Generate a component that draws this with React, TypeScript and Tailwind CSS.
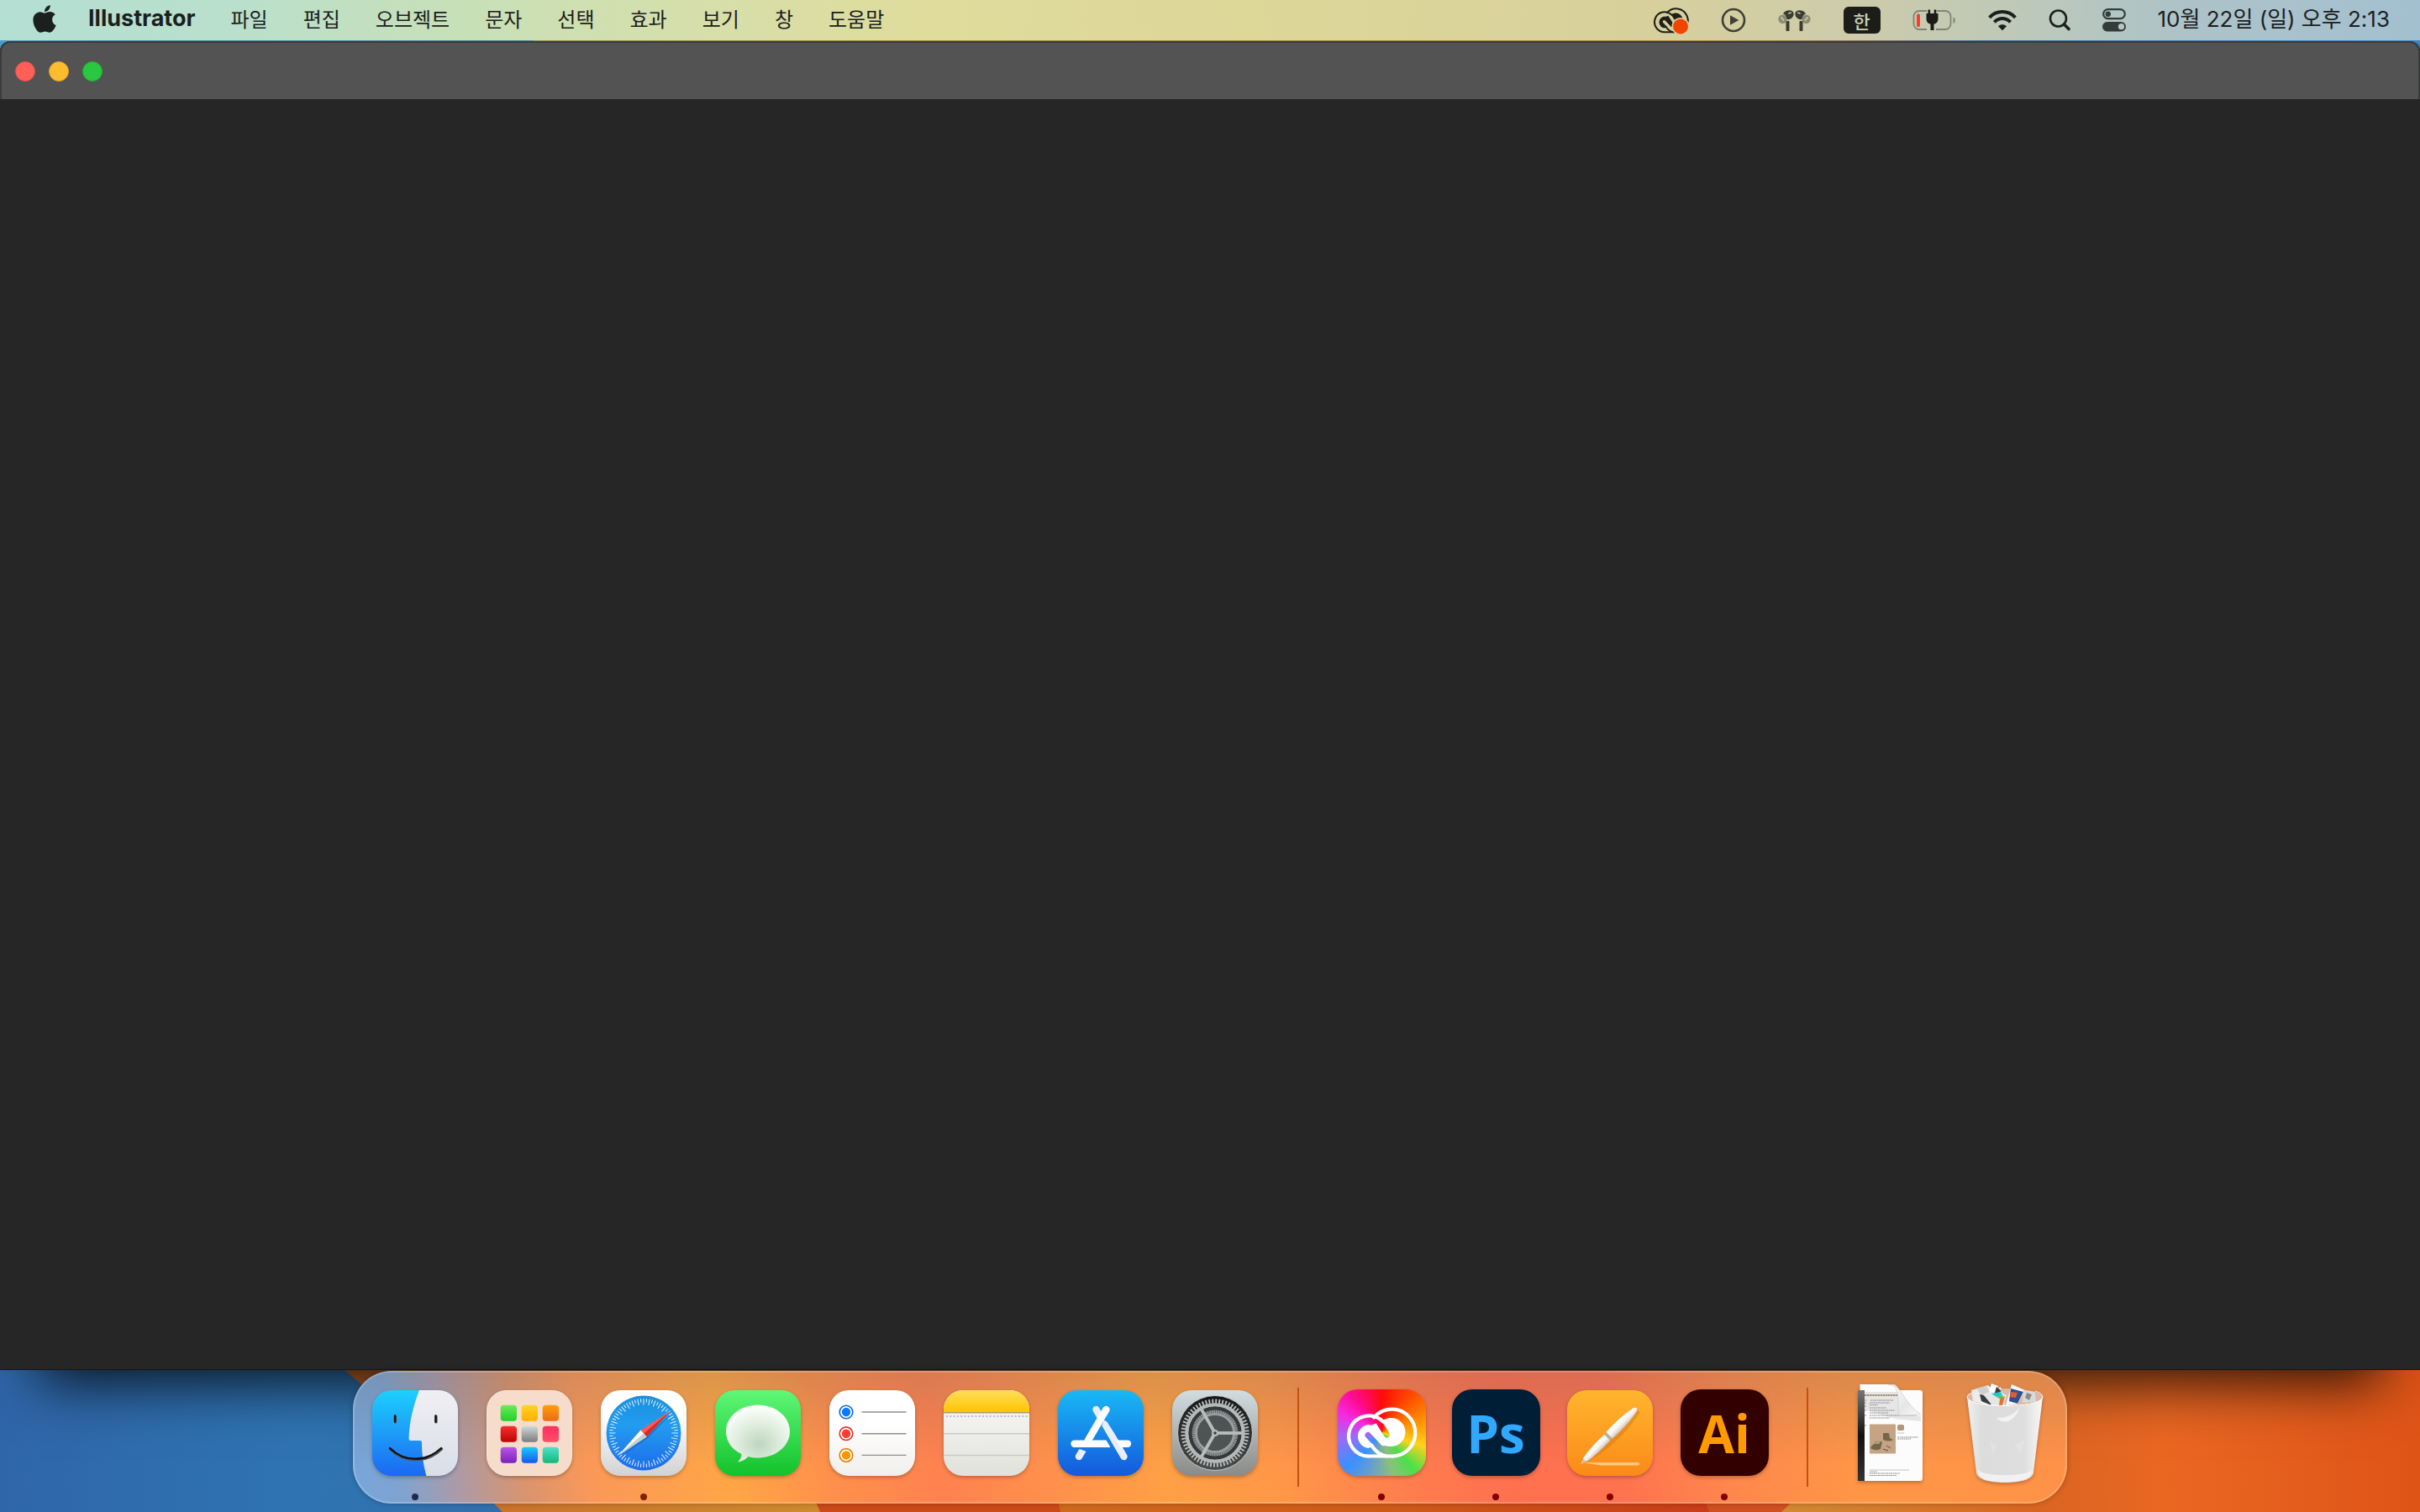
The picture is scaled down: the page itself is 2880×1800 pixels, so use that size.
import type { ReactNode } from 'react'
import { FaApple } from 'react-icons/fa'

const MENUS = ['파일', '편집', '오브젝트', '문자', '선택', '효과', '보기', '창', '도움말']

interface DockApp {
  nome: string
  icon: ReactNode
  dot?: string
}

const APPS: DockApp[] = [
  { nome: 'Finder', icon: <FinderIcon />, dot: 'bg-[#1c2a4c]' },
  { nome: 'Launchpad', icon: <LaunchpadIcon /> },
  { nome: 'Safari', icon: <SafariIcon />, dot: 'bg-[#7f2200]' },
  { nome: '메시지', icon: <MessagesIcon /> },
  { nome: '미리 알림', icon: <RemindersIcon /> },
  { nome: '메모', icon: <NotesIcon /> },
  { nome: 'App Store', icon: <AppStoreIcon /> },
  { nome: '시스템 설정', icon: <SettingsIcon /> },
]

const OPEN_APPS: DockApp[] = [
  { nome: 'Creative Cloud', icon: <CreativeCloudIcon />, dot: 'bg-[#7f0000]' },
  { nome: 'Photoshop', icon: <AdobeIcon label="Ps" className="bg-[#001e36] text-[#31a8ff]" />, dot: 'bg-[#7f0000]' },
  { nome: 'Pages', icon: <PagesIcon />, dot: 'bg-[#7f0000]' },
  { nome: 'Illustrator', icon: <AdobeIcon label="Ai" className="bg-[#330000] text-[#ff9a00]" />, dot: 'bg-[#7f0000]' },
]

const FILES: DockApp[] = [
  { nome: '문서', icon: <DocumentIcon /> },
  { nome: '휴지통', icon: <TrashIcon /> },
]

export default function App() {
  return (
    <div className="flex min-h-screen flex-col bg-[linear-gradient(90deg,#4a9cc8_0%,#3f87a6_4%,#3d8298_22%,#8f8a4a_22.1%,#a0822f_38%,#b07a30_70%,#8a6a50_77%,#2f6a9c_82%,#3a84c4_100%)] font-['Inter','Noto_Sans_CJK_KR',sans-serif] text-[#1b201e]">
      <MenuBar />
      <AppWindow />
      <footer className="relative flex justify-center pt-px pb-[10px]">
        <Wallpaper />
        <Dock />
      </footer>
    </div>
  )
}

function MenuBar() {
  return (
    <header className="flex h-12 items-center justify-between bg-[linear-gradient(90deg,#b4dfd3_0%,#b9e0cd_9%,#c6e0b9_18%,#d5dfac_28%,#dfdc9c_38%,#ddd798_52%,#d8d09c_68%,#cccbab_77%,#bfc9b8_83%,#adc3c8_90%,#a3c0d0_100%)] pr-9 pl-[37px]">
      <nav className="flex items-center" aria-label="메뉴 막대">
        <button aria-label="Apple" className="mr-9 pb-1">
          <FaApple className="h-[37px] w-8" />
        </button>
        <div className="flex items-center gap-[42px] pb-1">
          <button className="text-[27px] leading-8 font-bold">Illustrator</button>
          {MENUS.map(m => (
            <button key={m} className="font-['Noto_Sans_CJK_KR',sans-serif] text-2xl leading-8 whitespace-nowrap">
              {m}
            </button>
          ))}
        </div>
      </nav>
      <div className="flex items-center gap-[38px]">
        <button aria-label="Creative Cloud">
          <MenuCloudIcon />
        </button>
        <button aria-label="재생">
          <svg viewBox="0 0 30 30" className="size-[30px] text-[#3f4136]" fill="currentColor">
            <circle cx="15" cy="15" r="13" fill="none" stroke="currentColor" strokeWidth="2.6" />
            <path d="M11 9.2v11.6L21.4 15z" />
          </svg>
        </button>
        <button aria-label="AirPods">
          <AirPodsIcon />
        </button>
        <button className="flex h-8 w-11 items-center justify-center rounded-md bg-[#1c1d19] font-['Noto_Sans_CJK_KR',sans-serif] text-[22px] leading-8 font-medium text-[#cccdb2]">
          한
        </button>
        <button aria-label="배터리">
          <BatteryIcon />
        </button>
        <button aria-label="Wi-Fi">
          <svg viewBox="0 0 34 26" className="h-[26px] w-[34px]" fill="none" stroke="currentColor" strokeWidth="4">
            <path d="M1.6 9.8C10 .8 24 .8 32.4 9.8" />
            <path d="M7.4 15.3c5.5-5.6 13.7-5.6 19.2 0" />
            <path d="M12 20.2c3-2.6 7-2.6 10 0L17 25.2z" fill="currentColor" stroke="none" />
          </svg>
        </button>
        <button aria-label="검색">
          <svg viewBox="0 0 26 26" className="size-[26px]" fill="none" stroke="currentColor" strokeLinecap="round">
            <circle cx="11.5" cy="11" r="9.5" strokeWidth="2.6" />
            <path d="M18.5 18l5.500 5.500" strokeWidth="3.6" />
          </svg>
        </button>
        <button aria-label="제어 센터">
          <svg viewBox="0 0 28 28" className="size-7 text-[#343c3a]">
            <rect x="1.2" y="1.2" width="25.6" height="11" rx="5.5" fill="none" stroke="currentColor" strokeWidth="2.2" />
            <circle cx="6.8" cy="6.7" r="3.2" fill="currentColor" />
            <rect y="16" width="28" height="11.5" rx="5.7" fill="currentColor" />
            <circle cx="22.5" cy="21.7" r="3.6" fill="#b8c6bf" />
          </svg>
        </button>
        <time className="pb-0.5 text-[26px] leading-8 whitespace-nowrap">10월 22일 (일) 오후 2:13</time>
      </div>
    </header>
  )
}

function AppWindow() {
  return (
    <main className="relative z-10 mt-px flex flex-1 flex-col rounded-t-xl bg-[#262626] shadow-[0_60px_64px_-46px_rgba(0,0,0,0.85)]">
      <div className="flex h-[69px] items-center gap-4 rounded-t-xl border-2 border-b-0 border-[#3a3b3b] bg-[#535353] px-4">
        <button aria-label="닫기" className="size-6 rounded-full border border-[#dc4f49] bg-[#ff5f57]" />
        <button aria-label="최소화" className="size-6 rounded-full border border-[#dba02f] bg-[#febc2e]" />
        <button aria-label="확대" className="size-6 rounded-full border border-[#27a938] bg-[#28c840]" />
      </div>
      <div className="flex-1 border-b border-[#161616] bg-[#262626]" />
    </main>
  )
}

function Dock() {
  return (
    <div className="relative z-20 flex h-[158px] items-stretch rounded-[46px] border-2 border-white/20 bg-[linear-gradient(180deg,rgba(90,90,90,0.22)_0%,rgba(90,90,90,0)_72%),linear-gradient(80deg,#76a6dc_0%,#7fa3cf_3%,#a99bab_6%,#d9946f_10%,#fb9858_14%,#ffa645_22%,#ff8f4c_28%,#ff824f_34%,#ff8f4c_40%,#ffa045_47%,#ff9648_54%,#ff7d4e_61%,#ff704f_67%,#ff724f_73%,#ff884c_80%,#ff9646_87%,#ff9447_94%,#ff9148_100%)] bg-origin-border px-1 shadow-[0_0_6px_rgba(0,0,0,0.25)]">
      <DockGroup apps={APPS} />
      <Divider />
      <DockGroup apps={OPEN_APPS} />
      <Divider />
      <DockGroup apps={FILES} />
    </div>
  )
}

function DockGroup({ apps }: { apps: DockApp[] }) {
  return (
    <div className="flex">
      {apps.map(a => (
        <button key={a.nome} aria-label={a.nome} className="flex w-[136px] flex-col items-center justify-between pb-0.5">
          <span className="flex h-[143px] items-center drop-shadow-[0_2px_2px_rgba(0,0,0,0.25)]">{a.icon}</span>
          {a.dot && <span className={`size-2 rounded-full ${a.dot}`} />}
        </button>
      ))}
    </div>
  )
}

function Divider() {
  return (
    <div className="flex w-[62px] items-center justify-center">
      <div className="h-[118px] w-0.5 bg-[#c4520e]" />
    </div>
  )
}

function Wallpaper() {
  return (
    <svg viewBox="0 0 2880 169" preserveAspectRatio="none" className="absolute inset-0 size-full">
      <defs>
        <linearGradient id="wpBlue" gradientUnits="userSpaceOnUse" x2="600">
          <stop offset="0" stopColor="#2f66aa" />
          <stop offset=".6" stopColor="#2f74b2" />
          <stop offset="1" stopColor="#316fac" />
        </linearGradient>
        <linearGradient id="wpOrange" gradientUnits="userSpaceOnUse" x1="410" x2="970">
          <stop offset="0" stopColor="#c8672c" />
          <stop offset="1" stopColor="#cf8a2c" />
        </linearGradient>
        <linearGradient id="wpRight">
          <stop offset="0" stopColor="#d28a30" />
          <stop offset=".4" stopColor="#d96522" />
          <stop offset=".6" stopColor="#ea6722" />
          <stop offset="1" stopColor="#de5417" />
        </linearGradient>
        <linearGradient id="wpRed">
          <stop offset="0" stopColor="#cf6a1c" />
          <stop offset=".5" stopColor="#cf5a18" />
          <stop offset="1" stopColor="#c93a18" />
        </linearGradient>
      </defs>
      <rect width="2880" height="169" fill="url(#wpBlue)" />
      <path d="M410 0C480 60 540 110 598 169H2880V0z" fill="url(#wpOrange)" />
      <path d="M960 130l16 39h1200V130z" fill="#cb4a18" />
      <path d="M1254 130l8 39h800V130z" fill="url(#wpRed)" />
      <path d="M2020 130l14 39h160V130z" fill="#cf5020" />
      <path d="M2160 130l-40 39h760V0h-720z" fill="url(#wpRight)" />
    </svg>
  )
}

/* The linked-cloud mark, shared by the menu bar and the dock */
function CloudMark({ id, color }: { id: string; color: string }) {
  return (
    <g>
      <mask id={id} maskUnits="userSpaceOnUse" x="0" y="0" width="105" height="103">
        <g fill="#fff">
          <circle cx="38" cy="56" r="14" />
          <circle cx="63.5" cy="51" r="17" />
          <path d="M38 42l26-8v34L55 67 38 70z" />
        </g>
        <path d="M40 39l7-3L58.500 54" stroke="#000" strokeWidth="7" fill="none" strokeLinecap="round" />
        <path d="M36 54.500L52 71.500" stroke="#000" strokeWidth="7" fill="none" strokeLinecap="round" />
        <path d="M30 74l14-8 10 12z" fill="#000" />
      </mask>
      <rect width="105" height="103" fill={color} mask={`url(#${id})`} />
      <g fill="none" stroke={color} strokeWidth="4.2" strokeLinecap="round">
        <path d="M43 33.500A28 28 0 1 1 62 79.500H38.500A24 24 0 1 1 54 38.500" />
        <path d="M40 66.500C45 74 50 78.500 58 79.500" />
      </g>
    </g>
  )
}

/* menu bar icons */

function MenuCloudIcon() {
  return (
    <svg viewBox="0 0 42 34" className="h-[34px] w-[42px]">
      <g transform="translate(-5.500 -8.500) scale(.5)">
        <CloudMark id="ccMenu" color="#1f201a" />
      </g>
      <circle cx="32" cy="24.5" r="10.6" fill="#d6cf9e" />
      <circle cx="32" cy="24.5" r="9" fill="#f04400" />
    </svg>
  )
}

function AirPodsIcon() {
  return (
    <svg viewBox="0 0 40 28" className="h-7 w-10">
      <g id="bud">
        <circle cx="5.5" cy="12.8" r="5.2" fill="#8c8c72" />
        <path d="M3.500 10.500l3.500 4" stroke="#cfceac" strokeWidth="1.6" />
        <path d="M6 6.200C9 1 18 1 18.600 6c.4 4-3 7-6.500 7.200-1.500-.2-1.800-1-2-2C9.500 8.600 8 7 6 6.200z" fill="#3b3c32" />
        <path d="M12.300 6l3.500-1" stroke="#cfceac" strokeWidth="1.5" />
        <rect x="9.5" y="15" width="4" height="12" rx="1" fill="#3b3c32" />
      </g>
      <use href="#bud" transform="translate(39 0) scale(-1 1)" />
    </svg>
  )
}

function BatteryIcon() {
  return (
    <svg viewBox="0 0 52 28" className="h-7 w-[52px]">
      <path d="M17 3H8a6.500 6.500 0 0 0-6.500 6.500v9A6.500 6.500 0 0 0 8 25h9M29 3h10a6.500 6.500 0 0 1 6.500 6.500v9A6.500 6.500 0 0 1 39 25H28" fill="none" stroke="#7f8573" strokeWidth="1.8" />
      <path d="M48.500 10.500c3 1 3 6.500 0 7.500z" fill="#7f8573" />
      <rect x="5" y="6.5" width="4" height="15.5" rx="1.5" fill="#ff3b30" />
      <path d="M18.500 1.500h2.600V6h4.600V1.500h2.600V6h2.200v6.500c0 3.500-2 5.500-5 6.300V26h-4v-7.200c-3-.8-5-2.800-5-6.300V6h2z" fill="#1b1c18" />
    </svg>
  )
}

/* dock icons */

function FinderIcon() {
  return (
    <svg viewBox="0 0 102 102" className="size-[102px]">
      <defs>
        <linearGradient id="fBlue" x2="0" y2="1">
          <stop stopColor="#1dd0fe" />
          <stop offset="1" stopColor="#1c68f2" />
        </linearGradient>
        <linearGradient id="fWhite" x2="0" y2="1">
          <stop stopColor="#f0eff3" />
          <stop offset="1" stopColor="#d9dee8" />
        </linearGradient>
        <clipPath id="fClip">
          <rect width="102" height="102" rx="23" />
        </clipPath>
      </defs>
      <g clipPath="url(#fClip)">
        <rect width="102" height="102" fill="url(#fBlue)" />
        <path d="M56 0C49 18 44 38 43.500 58q0 2 2 2H57q2 0 2 2c0 14 2 28 5.500 40H102V0z" fill="url(#fWhite)" />
      </g>
      <g fill="none" stroke="#555" strokeWidth="3.2" strokeLinecap="round">
        <path d="M27.500 31v7M76 31v7M21.500 70c17 17 43 17 61 0" />
      </g>
      <g fill="none" stroke="#111" strokeWidth="2.4" strokeLinecap="round">
        <path d="M27 30.500v7M75.500 30.500v7M21 69c17 17 43 17 61 0" />
      </g>
    </svg>
  )
}

const TILES = [
  ['#6eea5a', '#22cf2a'],
  ['#ffd328', '#ffae05'],
  ['#ff9f0a', '#ea6c18'],
  ['#f5302c', '#bd0404'],
  ['#cfd8dc', '#7c7c7c'],
  ['#ff2d5e', '#ff4f68'],
  ['#b957e8', '#7b22b8'],
  ['#18cdfb', '#1a55ee'],
  ['#50e0c8', '#14b87a'],
]

function LaunchpadIcon() {
  return (
    <svg viewBox="0 0 102 102" className="size-[102px]">
      <rect x=".5" y=".5" width="101" height="101" rx="23" fill="#f5dccb" stroke="#f9e8dc" />
      {TILES.map(([from, to], i) => (
        <g key={from}>
          <linearGradient id={`tile${i}`} x2="0" y2="1">
            <stop stopColor={from} />
            <stop offset="1" stopColor={to} />
          </linearGradient>
          <rect x={16.7 + (i % 3) * 25} y={17.7 + Math.floor(i / 3) * 25} width="19.3" height="19" rx="4" fill={`url(#tile${i})`} />
        </g>
      ))}
    </svg>
  )
}

function SafariIcon() {
  return (
    <svg viewBox="0 0 102 102" className="size-[102px]">
      <defs>
        <linearGradient id="sBg" x2="0" y2="1">
          <stop offset=".3" stopColor="#fff" />
          <stop offset="1" stopColor="#d2d2d2" />
        </linearGradient>
        <linearGradient id="sDial" x2="0" y2="1">
          <stop stopColor="#1b8fdc" />
          <stop offset=".4" stopColor="#229cf0" />
          <stop offset="1" stopColor="#1e6bea" />
        </linearGradient>
      </defs>
      <rect width="102" height="102" rx="23" fill="url(#sBg)" />
      <circle cx="51" cy="51" r="44.5" fill="url(#sDial)" />
      {Array.from({ length: 72 }, (_, i) => (
        <path
          key={i}
          d={i % 2 ? 'M51 10v4.500' : 'M51 10v7.500'}
          stroke="#e2f3ff"
          strokeWidth="1"
          transform={`rotate(${i * 5} 51 51)`}
        />
      ))}
      <path d="M84 28L56 57 23 80z" fill="#0a4a9a" opacity=".35" />
      <path d="M82.500 25L47.500 47.500l7 8z" fill="#ff5a52" />
      <path d="M82.500 25L51 51.500l3.500 4z" fill="#cf2f2c" />
      <path d="M21 77.500l26.500-30 7 8z" fill="#fff" />
      <path d="M21 77.500l30-26 3.500 4z" fill="#c9ccd0" />
    </svg>
  )
}

function MessagesIcon() {
  return (
    <svg viewBox="0 0 102 102" className="size-[102px]">
      <defs>
        <linearGradient id="mBg" x2="0" y2="1">
          <stop stopColor="#5ff777" />
          <stop offset="1" stopColor="#12c22b" />
        </linearGradient>
        <radialGradient id="mBubble" cx=".52" cy=".68" r=".62">
          <stop stopColor="#bfd6be" />
          <stop offset=".5" stopColor="#dcebdb" />
          <stop offset="1" stopColor="#f8fdf8" />
        </radialGradient>
      </defs>
      <rect width="102" height="102" rx="23" fill="url(#mBg)" />
      <path d="M51 17.500c21 0 38 14 38 31.500S72 80.500 51 80.500c-4 0-8-.5-11.500-1.500C36 82.500 32 85 27 85.500c3-3 4.500-6 4.500-9.500C20 70.500 13 61 13 49c0-17.500 17-31.500 38-31.500z" fill="url(#mBubble)" />
    </svg>
  )
}

function RemindersIcon() {
  return (
    <svg viewBox="0 0 102 102" className="size-[102px]">
      <linearGradient id="rBg" x2="0" y2="1">
        <stop offset=".4" stopColor="#fff" />
        <stop offset="1" stopColor="#f1efec" />
      </linearGradient>
      <rect width="102" height="102" rx="23" fill="url(#rBg)" />
      {['#0a7aff', '#ff3b30', '#ff9500'].map((c, i) => (
        <g key={c} transform={`translate(0 ${i * 25.7})`}>
          <circle cx="20" cy="26" r="7.8" fill="#fff" stroke={c} strokeWidth="1.6" />
          <circle cx="20" cy="26" r="7.8" fill="none" stroke="#000" strokeOpacity=".12" strokeWidth="1.6" />
          <circle cx="20" cy="26" r="5.2" fill={c} />
          <path d="M38.500 26h53" stroke="#8e8e8e" strokeWidth="1.4" />
        </g>
      ))}
    </svg>
  )
}

function NotesIcon() {
  return (
    <svg viewBox="0 0 102 102" className="size-[102px]">
      <defs>
        <linearGradient id="nTop" x2="0" y2="1">
          <stop stopColor="#fede5c" />
          <stop offset="1" stopColor="#fdc400" />
        </linearGradient>
        <linearGradient id="nPaper" x2="0" y2="1">
          <stop stopColor="#fafafa" />
          <stop offset="1" stopColor="#e1e1db" />
        </linearGradient>
        <clipPath id="nClip">
          <rect width="102" height="102" rx="23" />
        </clipPath>
      </defs>
      <g clipPath="url(#nClip)">
        <rect width="102" height="102" fill="url(#nPaper)" />
        <rect width="102" height="26" fill="url(#nTop)" />
        <path d="M0 26.700h102" stroke="#a89c7c" strokeWidth="1.6" />
        <path d="M3 31h98" stroke="#bcbcc4" strokeWidth="2" strokeDasharray="2 2.3" />
        <path d="M0 51.700h102M0 77.500h102" stroke="#c9c9c9" strokeWidth="1.4" />
      </g>
    </svg>
  )
}

function AppStoreIcon() {
  return (
    <svg viewBox="0 0 102 102" className="size-[102px]">
      <defs>
        <linearGradient id="aBg" x2="0" y2="1">
          <stop stopColor="#18b9f5" />
          <stop offset="1" stopColor="#1459dd" />
        </linearGradient>
        <clipPath id="aStub">
          <path d="M0 84V68q16-2 34 5v20H0z" />
        </clipPath>
        <clipPath id="aBar">
          <path d="M0 55h55l8 14H0zM67 55h35v14H75z" />
        </clipPath>
        <clipPath id="aLeg">
          <path d="M54.500 36q4 0 6 5l40 60H60L50 48z" />
        </clipPath>
      </defs>
      <rect width="102" height="102" rx="23" fill="url(#aBg)" />
      <g fill="none" stroke="#e8effa" strokeWidth="8.4" strokeLinecap="round">
        <path d="M45.500 23l4 7" />
        <path d="M53 35l25.500 44" clipPath="url(#aLeg)" />
        <path d="M19.500 63.700H83" clipPath="url(#aBar)" stroke="#fff" />
        <path d="M31.500 68L25 79" clipPath="url(#aStub)" />
        <path d="M57.500 23L36 59.500" stroke="#fff" />
      </g>
    </svg>
  )
}

function SettingsIcon() {
  return (
    <svg viewBox="0 0 102 102" className="size-[102px]" fill="none">
      <defs>
        <linearGradient id="gBg" x2="0" y2="1">
          <stop stopColor="#d2dde0" />
          <stop offset="1" stopColor="#8a8a88" />
        </linearGradient>
        <linearGradient id="gDark" x2="0" y2="1">
          <stop stopColor="#141617" />
          <stop offset="1" stopColor="#4c4c4c" />
        </linearGradient>
      </defs>
      <rect width="102" height="102" rx="23" fill="url(#gBg)" />
      <circle cx="51" cy="51" r="44.5" fill="url(#gDark)" stroke="#c9cccc" strokeWidth="1" />
      <circle cx="51" cy="51" r="37.5" stroke="#b9bcbc" strokeWidth="6" strokeDasharray="1.9 2.027" />
      <circle cx="51" cy="51" r="33.5" stroke="#b5b8b8" strokeWidth="4.5" />
      <circle cx="51" cy="51" r="31.2" fill="#5c6162" />
      <circle cx="51" cy="51" r="29.5" stroke="#34383a" strokeWidth="4" />
      <circle cx="51" cy="51" r="25.5" stroke="#999d9d" strokeWidth="3.5" strokeDasharray="1.500 1.120" />
      <circle cx="51" cy="51" r="22.5" stroke="#9a9e9e" strokeWidth="3" />
      <circle cx="51" cy="51" r="21" fill="#4e5354" />
      <g stroke="#b9bcbc" strokeWidth="3.8">
        <path d="M51 51h32" />
        <path d="M51 51h32" transform="rotate(120 51 51)" />
        <path d="M51 51h32" transform="rotate(240 51 51)" />
      </g>
      <circle cx="51" cy="51" r="4" fill="#b9bcbc" />
      <circle cx="51" cy="51" r="1.8" fill="#3a3a3a" />
    </svg>
  )
}

function CreativeCloudIcon() {
  return (
    <span className="block rounded-3xl bg-[conic-gradient(from_0deg_at_50%_50%,#ff0a0a_0deg,#ff4a00_38deg,#ff8a00_70deg,#ffd21a_108deg,#4be04a_138deg,#8cc07a_165deg,#6aa0c8_195deg,#3a90ff_225deg,#9a6cf5_262deg,#f52ae0_295deg,#ff0a90_322deg,#ff0a0a_360deg)]">
      <svg viewBox="0 0 105 103" className="h-[103px] w-[105px]">
        <CloudMark id="ccDock" color="#fff" />
      </svg>
    </span>
  )
}

function AdobeIcon({ label, className }: { label: string; className: string }) {
  return (
    <span className={`flex h-[103px] w-[105px] items-center justify-center rounded-3xl font-['Open_Sans',sans-serif] text-[62px] leading-[70px] font-bold ${className}`}>
      {label}
    </span>
  )
}

function PagesIcon() {
  return (
    <svg viewBox="0 0 102 102" className="size-[102px]">
      <defs>
        <linearGradient id="pBg" x2="0" y2="1">
          <stop stopColor="#ffb52e" />
          <stop offset="1" stopColor="#fb8a18" />
        </linearGradient>
        <linearGradient id="pPen" x2="0" y2="1">
          <stop stopColor="#fff" />
          <stop offset=".55" stopColor="#f6f3f0" />
          <stop offset="1" stopColor="#cfc5bd" />
        </linearGradient>
      </defs>
      <rect width="102" height="102" rx="23" fill="url(#pBg)" />
      <path d="M18 86h66q2.500 0 2.500 1.700t-2.500 1.800H40z" fill="#ffc784" />
      <g transform="translate(16 88) rotate(-45) scale(1 .82)">
        <path d="M4 3C30 14 60 16 94 8L93 2z" fill="#a85a00" opacity=".25" />
        <path d="M0 0l8-3.600v7.200z" fill="#d5c7a0" />
        <path d="M7-3.500C18-6.500 34-6.500 45-6V6C34 6.500 18 6.500 7 3.500z" fill="url(#pPen)" />
        <path d="M45-6h3.500V6H45z" fill="#b5b0a8" />
        <path d="M48.500-6.500C66-7.500 80-6.500 91-3.500q7 3.500 0 7C80 6.500 66 7.500 48.500 6.500z" fill="url(#pPen)" />
      </g>
    </svg>
  )
}

function DocumentIcon() {
  return (
    <svg viewBox="0 0 78 116" className="h-[116px] w-[78px]">
      <defs>
        <linearGradient id="dSpine" x2="0" y2="1">
          <stop stopColor="#777" />
          <stop offset=".5" stopColor="#111" />
          <stop offset="1" stopColor="#333" />
        </linearGradient>
        <linearGradient id="dCurl" y2="1">
          <stop stopColor="#fff" />
          <stop offset=".6" stopColor="#e6e6e6" />
          <stop offset="1" stopColor="#fafafa" />
        </linearGradient>
      </defs>
      <path d="M2.500 0H42q4 0 7 7h25q3 0 3 3v102q0 3-3 3H2.500z" fill="#fcfcfc" />
      <path d="M8 9h42v28l25 1v6L44 41 8 30z" fill="#d0d0d0" opacity=".5" />
      <path d="M8 13h42" stroke="#a8906e" strokeWidth="1.8" strokeDasharray="2.500 .6" />
      <g stroke="#8a8a8a" strokeWidth=".9" strokeDasharray="2 .5">
        <path d="M15 19h27M14 22h24M14 24.500h10M14 28h20M14 31h30M14 34h22M14 37h56M14 40h24" />
        <path d="M8 19h2M8 22h2M8 26h2M8 31h2M8 37h2M8 49h2M47 63h25M47 65h16M14 106h36M14 108.500h32" />
      </g>
      <path d="M14 102h47" stroke="#aaa" strokeWidth=".7" />
      <path d="M14 104h9" stroke="#e08080" strokeWidth=".8" />
      <rect x="14" y="47.5" width="31" height="35" fill="#c6a384" />
      <path d="M15 76q4-8 14-8l-2 9q-6 3-12-1zM30 58h7l1 6 4 2q-4 3-12 0z" fill="#74664a" />
      <ellipse cx="23" cy="69" rx="3.5" ry="2" fill="#a9a07a" />
      <path d="M30 77l6 2M34 73l5 3" stroke="#5d513c" strokeWidth="1" />
      <rect x="47" y="48" width="8" height="7" rx="2" fill="#b59679" />
      <path d="M47 58h8" stroke="#aaa" strokeWidth=".7" />
      <path d="M36 0c9 0 12 8 12 18v16q0 3 3 3l24-1C66 30 58 20 52 10 48 4 44 0 36 0z" fill="url(#dCurl)" stroke="#cfcfcf" strokeWidth=".8" />
      <path d="M0 7h8v108H0z" fill="url(#dSpine)" />
    </svg>
  )
}

function TrashIcon() {
  return (
    <svg viewBox="0 0 92 120" className="h-[120px] w-[92px]">
      <defs>
        <linearGradient id="tBody">
          <stop stopColor="#f2f0ef" />
          <stop offset=".2" stopColor="#dcdcdc" />
          <stop offset=".75" stopColor="#dedede" />
          <stop offset="1" stopColor="#f8f8f8" />
        </linearGradient>
      </defs>
      <ellipse cx="46" cy="17" rx="45" ry="10" fill="#dab9a5" />
      <path d="M6 9L26 3l7 6 8-4 5 22H24L8 22z" fill="#ececec" />
      <path d="M30 1l8 3-2 8-9-1z" fill="#fff" />
      <path d="M12 7l12-3 4 7-10 4z" fill="#d0d0d0" />
      <path d="M16 14l10 2 4 11-12-5zM36 5l6 5-9 5z" fill="#3c3c3c" />
      <path d="M20 14l22-2 6 3-4 12-14-1z" fill="#e5e5e5" />
      <path d="M30 13l11-2 2 4-7 2z" fill="#1fc7c9" />
      <path d="M36 17l8-2-1 6z" fill="#57c341" />
      <path d="M40 20l6-4-3 11h-4z" fill="#e8702a" />
      <path d="M54 2l16 7-9 17-14 1z" fill="#f6f6f6" />
      <path d="M53 7l15 4-7 14-10-3z" fill="#31508f" />
      <path d="M53 11l8 1-2 6-7-1z" fill="#e0602c" />
      <path d="M68 9l14 2 1 12-16 1z" fill="#d9d9d9" />
      <path d="M72 12l6 2-3 7-5-3z" fill="#8a8a8a" />
      <path d="M1 17c0 6 18 10.500 45 10.500S91 23 91 17l-11 90c-1 8-14 12-34 12s-33-4-34-12z" fill="url(#tBody)" />
      <path d="M36 42q20 0 28-14-4 14-14 18-8 2-14-4z" fill="#f7f7f7" opacity=".8" />
      <path d="M28 70l8 6-4 10zM58 74l12-6-6 18z" fill="#ececec" opacity=".4" />
      <path d="M14 104c6 8 58 8 64 0l-1 4c-2 7-14 10.500-31 10.500S16 115 14.500 108z" fill="#f6f6f6" opacity=".8" />
      <path d="M1 17c0 6 18 10.500 45 10.500S91 23 91 17" fill="none" stroke="#fff" strokeWidth="1.2" />
      <path d="M1 17c0-2 3-4 8-6M82 10c6 2 9 4 9 7" fill="none" stroke="#f6e5da" strokeWidth="1.2" />
    </svg>
  )
}
